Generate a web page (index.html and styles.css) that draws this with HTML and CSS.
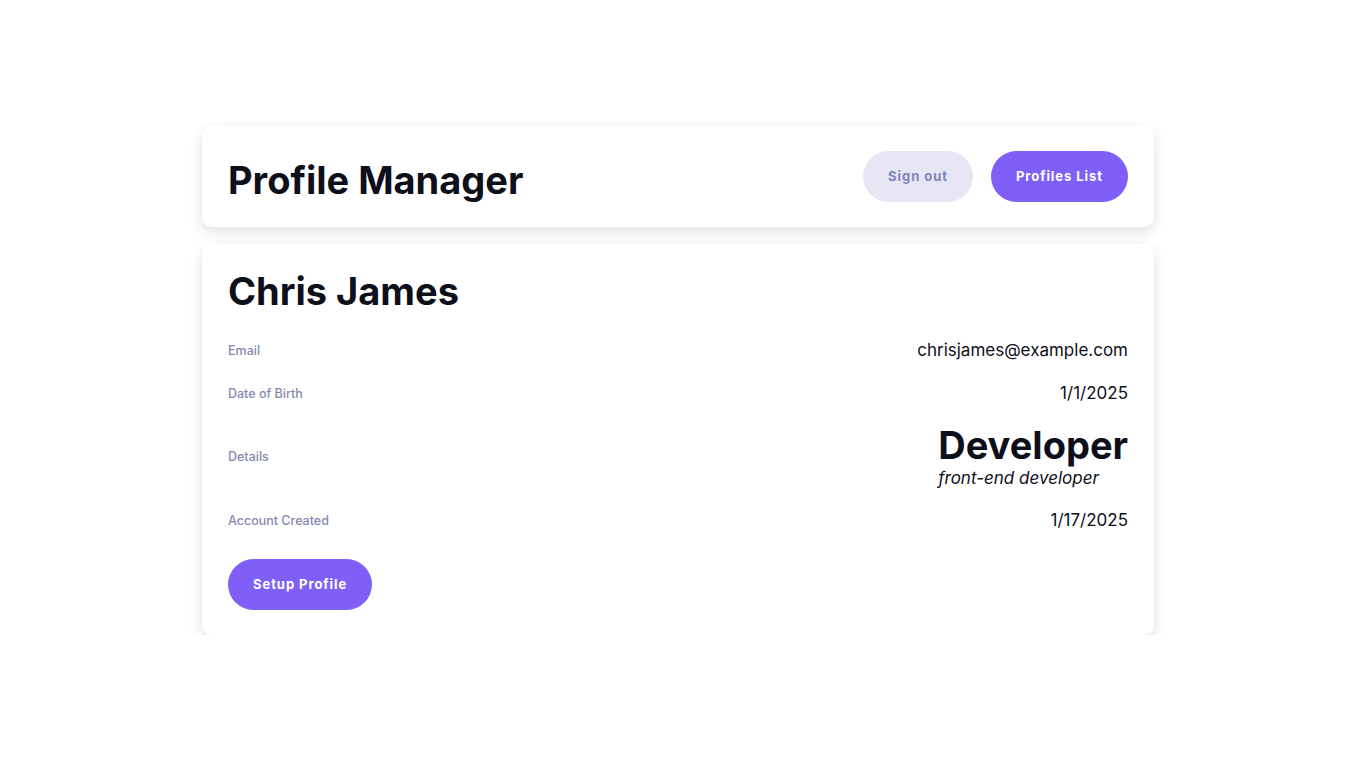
FILE: index.html
```html
<!DOCTYPE html>
<html lang="en">
<head>
<meta charset="utf-8">
<title>Profile Manager</title>
<link rel="stylesheet" href="styles.css">
</head>
<body>
<main class="container">
  <header class="card header">
    <h1 class="title">Profile Manager</h1>
    <div class="actions">
      <button class="btn btn-secondary">Sign out</button>
      <button class="btn btn-primary">Profiles List</button>
    </div>
  </header>
  <section class="card profile">
    <h2 class="name">Chris James</h2>
    <dl class="fields">
      <div class="row">
        <dt class="label">Email</dt>
        <dd class="value">chrisjames@example.com</dd>
      </div>
      <div class="row">
        <dt class="label">Date of Birth</dt>
        <dd class="value">1/1/2025</dd>
      </div>
      <div class="row">
        <dt class="label">Details</dt>
        <dd class="value details">
          <div class="role">Developer</div>
          <div class="role-desc">front-end developer</div>
        </dd>
      </div>
      <div class="row">
        <dt class="label">Account Created</dt>
        <dd class="value">1/17/2025</dd>
      </div>
    </dl>
    <button class="btn btn-primary">Setup Profile</button>
  </section>
</main>
</body>
</html>
```

FILE: styles.css
```css
* { box-sizing: border-box; }
html, body {
  margin: 0;
  padding: 0;
  background: #ffffff;
  font-family: Inter, "Noto Sans", sans-serif;
  color: #0d0f1a;
}
.container {
  width: 952px;
  margin: 126px auto 0;
  display: flex;
  flex-direction: column;
  gap: 17px;
}
.card {
  background: #fff;
  border-radius: 10px;
  box-shadow: 0 5px 14px rgba(20, 20, 40, 0.12);
  padding: 25px 26px;
}
.header {
  display: flex;
  align-items: center;
  justify-content: space-between;
}
.title {
  margin: 7px 0 0;
  font-size: 38px;
  font-weight: 700;
  line-height: 44px;
}
.actions {
  display: flex;
  gap: 18px;
}
.btn {
  font-family: Inter, "Noto Sans", sans-serif;
  font-size: 13px;
  font-weight: 700;
  letter-spacing: 0.95px;
  line-height: 17px;
  padding: 17px 25px;
  border: none;
  border-radius: 999px;
  cursor: pointer;
}
.btn-primary {
  background: #7f5ff8;
  color: #fff;
}
.btn-secondary {
  background: #e6e6f5;
  color: #7e84bb;
}
.profile {
  padding-top: 25px;
}
.name {
  margin: 0;
  font-size: 38px;
  font-weight: 700;
  line-height: 44px;
}
.fields {
  margin: 24px 0 26px;
  display: flex;
  flex-direction: column;
  gap: 17px;
}
.row {
  display: flex;
  justify-content: space-between;
  align-items: center;
}
.label {
  font-size: 12.5px;
  font-weight: 500;
  color: #8589b0;
}
.value {
  margin: 0;
  font-size: 17px;
  line-height: 26px;
  text-align: right;
}
.details {
  text-align: left;
}
.role {
  font-size: 38px;
  font-weight: 700;
  line-height: 44px;
}
.role-desc {
  font-size: 17px;
  font-style: italic;
  line-height: 23px;
}
```
